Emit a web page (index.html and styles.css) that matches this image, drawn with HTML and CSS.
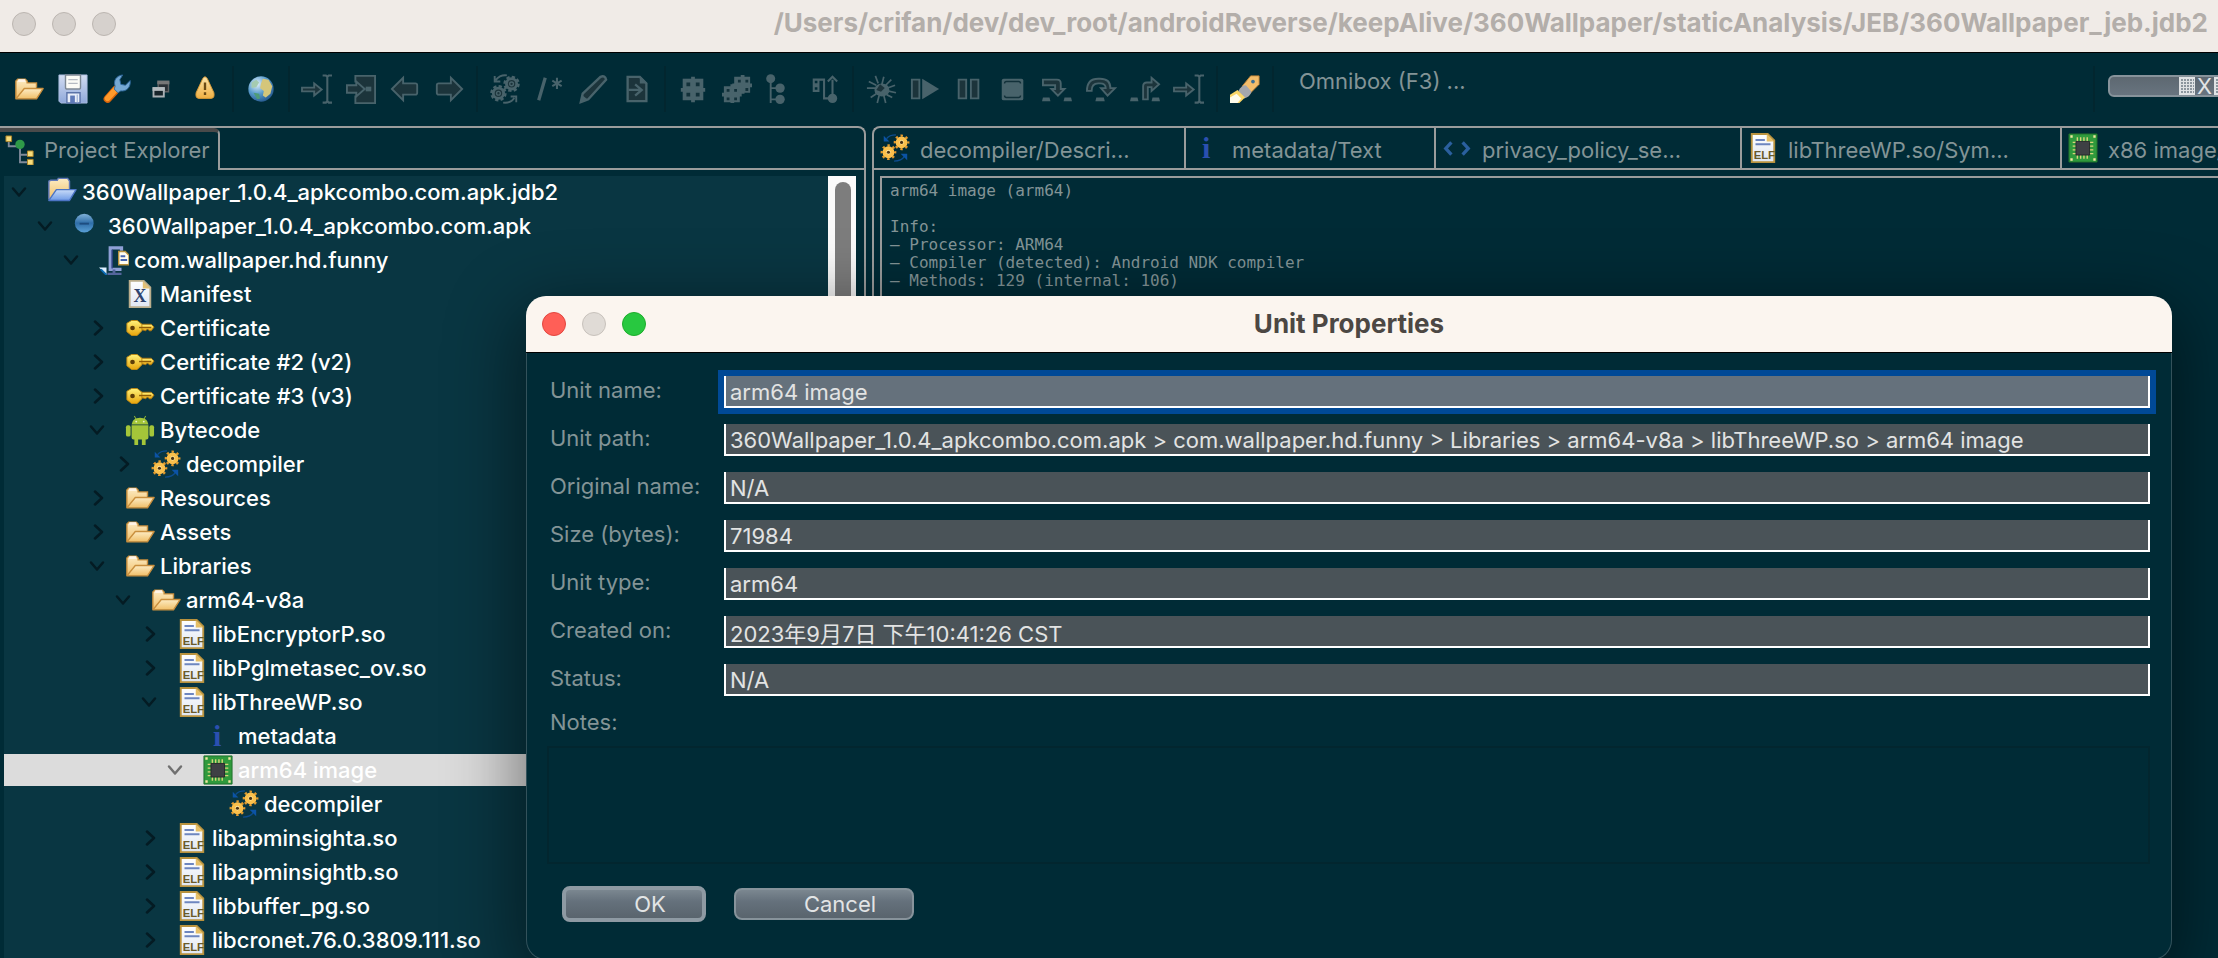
FILE: index.html
```html
<!DOCTYPE html>
<html lang="en">
<head>
<meta charset="utf-8">
<title>360Wallpaper_jeb.jdb2</title>
<link rel="stylesheet" href="styles.css">
</head>
<body>
<svg class="sprite" aria-hidden="true">
  <defs>
    <linearGradient id="gFolder" x1="0" y1="0" x2="0" y2="1"><stop offset="0" stop-color="#fdecc4"/><stop offset="1" stop-color="#f0bf68"/></linearGradient>
    <linearGradient id="gBlue" x1="0" y1="0" x2="0" y2="1"><stop offset="0" stop-color="#c9dcf8"/><stop offset="1" stop-color="#6f9be6"/></linearGradient>
    <linearGradient id="gSave" x1="0" y1="0" x2="0" y2="1"><stop offset="0" stop-color="#d3ddf1"/><stop offset="1" stop-color="#8fa8da"/></linearGradient>
    <linearGradient id="gWarn" x1="0" y1="0" x2="0" y2="1"><stop offset="0" stop-color="#fbe3a8"/><stop offset="1" stop-color="#efb043"/></linearGradient>
    <linearGradient id="gKey" x1="0" y1="0" x2="0" y2="1"><stop offset="0" stop-color="#fff27a"/><stop offset="1" stop-color="#e8a50c"/></linearGradient>
    <linearGradient id="gPage" x1="0" y1="0" x2="0" y2="1"><stop offset="0" stop-color="#ffffff"/><stop offset="1" stop-color="#dfe6f2"/></linearGradient>
    <radialGradient id="gGlobe" cx=".35" cy=".3" r=".8"><stop offset="0" stop-color="#e4f2fb"/><stop offset=".5" stop-color="#5a9ccc"/><stop offset="1" stop-color="#1d4f86"/></radialGradient>
    <linearGradient id="gBall" x1="0" y1="0" x2="0" y2="1"><stop offset="0" stop-color="#7fb0d8"/><stop offset=".5" stop-color="#2f6ea8"/><stop offset="1" stop-color="#5aa0d6"/></linearGradient>
  </defs>
</svg>
<svg class="symbols" aria-hidden="true">
  <symbol id="folder" viewBox="0 0 32 32">
    <path d="M2 26V7.500l2-2h8l2 2v2h10v5" fill="url(#gFolder)" stroke="#c98f3e" stroke-width="1.500"/>
    <path d="M4.500 5.500h7.500v3h-7.500z" fill="#fff4e6"/>
    <path d="M2 26.500L11 15.500H31L24 26.500Z" fill="url(#gFolder)" stroke="#c98f3e" stroke-width="1.500" stroke-linejoin="round"/>
  </symbol>
  <symbol id="folderblue" viewBox="0 0 32 32">
    <path d="M2 24V4.500l2-1h7l1-2h10l2 3v8" fill="url(#gFolder)" stroke="#6279b8" stroke-width="1.500"/>
    <path d="M2 25L10 13.500H31L24 25Z" fill="url(#gBlue)" stroke="#4c74c4" stroke-width="1.500" stroke-linejoin="round"/>
  </symbol>
  <symbol id="save" viewBox="0 0 32 32">
    <path d="M1 1h30v30H3l-2-2z" fill="url(#gSave)" stroke="#a9bbdf"/>
    <path d="M8 1h16v13q0 2-2 2H10q-2 0-2-2z" fill="#fbfbf6" stroke="#7d8894" stroke-width="1.500"/>
    <path d="M11 6h10M11 10h10" stroke="#b5bac2" stroke-width="1.500"/>
    <path d="M9.500 20h14v11h-14z" fill="#e9eef8" stroke="#5b73a8" stroke-width="1.500"/><path d="M13 23h5v8h-5z" fill="#5f7ab8"/><path d="M20.500 22v9" stroke="#8ea4d0"/>
  </symbol>
  <symbol id="wrench" viewBox="0 0 32 32">
    <path d="M6 26.500L15 16.500" stroke="#d9650a" stroke-width="8.500" stroke-linecap="round"/>
    <path d="M6 26L15 16" stroke="#ff9a2b" stroke-width="6" stroke-linecap="round"/>
    <path d="M14 13c-2-6 1-11 8-12l-3 5 1 5 5 1 5-5c1 7-4 12-10 11l-3 2-4-4z" fill="#76a9d4" stroke="#2d679c"/>
  </symbol>
  <symbol id="restore" viewBox="0 0 32 32">
    <path d="M13 9h11v10H13z" fill="#2a3035" stroke="#606264" stroke-width="1.500"/><path d="M12 7h13v4H12z" fill="#777"/>
    <path d="M8 15h11v9H8z" fill="#17242a" stroke="#a9b0b4" stroke-width="2"/><path d="M7 14h13v4H7z" fill="#b3babd"/>
  </symbol>
  <symbol id="warn" viewBox="0 0 32 32">
    <path d="M13.500 5q2.500-4 5 0l7 15q1 6-3 6h-13q-4 0-3-6z" fill="url(#gWarn)" stroke="#d79a35"/>
    <path d="M16 9v8M16 19.500v3" stroke="#6b4a14" stroke-width="2.500"/>
  </symbol>
  <symbol id="globe" viewBox="0 0 32 32">
    <circle cx="16" cy="16" r="13.500" fill="url(#gGlobe)"/>
    <path d="M18 5l6 1 4 7-2 8-5 4-3-2 1-5-4-3 1-5z" fill="#d5c67a"/><path d="M6 9l5-3 3 3-3 5-5 1z" fill="#a5cbb0"/><path d="M8 20l6 1 1 5-3 1z" fill="#4f9c78"/>
  </symbol>
  <symbol id="toCaret" viewBox="0 0 32 32">
    <path d="M0 14.500h13V10l8 6.500-8 6.500v-4.500H0z" fill="#1c343b" stroke="#48636b" stroke-width="2"/>
    <path d="M22 1.500h3.500l1.500 1.500 1.500-1.500H32M22 30.500h3.500l1.500-1.500 1.500 1.500H32M27 3v26" fill="none" stroke="#48636b" stroke-width="2.200"/>
  </symbol>
  <symbol id="enter" viewBox="0 0 32 32">
    <path d="M10 9V2h21v29H10v-8" fill="#1c343b" stroke="#48636b" stroke-width="2"/>
    <path d="M1 12h10V8l9 8-9 8v-4H1z" fill="#1c343b" stroke="#48636b" stroke-width="2"/><path d="M21 13.500h6v5h-6z" fill="#48636b"/>
  </symbol>
  <symbol id="left" viewBox="0 0 32 32"><path d="M2 16L14 4v6h13q2 0 2 2v8q0 2-2 2H14v6z" fill="#1c343b" stroke="#48636b" stroke-width="2"/></symbol>
  <symbol id="right" viewBox="0 0 32 32"><path d="M30 16L18 4v6H5q-2 0-2 2v8q0 2 2 2h13v6z" fill="#1c343b" stroke="#48636b" stroke-width="2"/></symbol>
  <symbol id="gearsOff" viewBox="0 0 32 32">
    <circle cx="9" cy="20.500" r="5.500" fill="#1c343b" stroke="#48636b" stroke-width="3"/><circle cx="9" cy="20.500" r="7.500" fill="none" stroke="#48636b" stroke-width="2.500" stroke-dasharray="3.500 2.390"/><circle cx="9" cy="20.500" r="2" fill="none" stroke="#48636b" stroke-width="1.500"/>
    <circle cx="23" cy="10.500" r="5.500" fill="#1c343b" stroke="#48636b" stroke-width="3"/><circle cx="23" cy="10.500" r="7.500" fill="none" stroke="#48636b" stroke-width="2.500" stroke-dasharray="3.500 2.390"/><circle cx="23" cy="10.500" r="2" fill="none" stroke="#48636b" stroke-width="1.500"/>
    <path d="M18 1.500q-7-1-12 5M5 2v6h6M14 30.500q8 1 12-5M28 30v-6h-6" fill="none" stroke="#48636b" stroke-width="2"/>
  </symbol>
  <symbol id="comment" viewBox="0 0 32 32"><path d="M5 28L12 4" stroke="#48636b" stroke-width="3.500"/><path d="M24.500 4v12M19.500 7l10 6M29.500 7l-10 6" stroke="#48636b" stroke-width="2.200"/></symbol>
  <symbol id="pencil" viewBox="0 0 32 32"><path d="M3 30l2-9L24 3q5-2 6 3L11 27z" fill="#1c343b" stroke="#48636b" stroke-width="2.500"/><path d="M2 31l2-9 6 5z" fill="#48636b"/></symbol>
  <symbol id="docArrow" viewBox="0 0 32 32"><path d="M6 3h13l7 7v19H6z" fill="#1c343b" stroke="#48636b" stroke-width="2.500"/><path d="M19 2v8h8z" fill="#48636b"/><path d="M7 17h12M14 11l7 6-7 6" fill="none" stroke="#48636b" stroke-width="2.500"/></symbol>
  <symbol id="chipOff" viewBox="0 0 32 32"><path d="M5 5h22v23H5z" fill="#48636b"/><path d="M14 3h4v27h-4zM3 15h26v4H3z" fill="#48636b"/><path d="M9 9h4v4H9zM19 9h4v4h-4zM9 20h4v4H9zM19 20h4v4h-4z" fill="#12313a"/></symbol>
  <symbol id="chipsOff" viewBox="0 0 32 32"><path d="M13 3h17v17H13zM2 13h17v17H2zM20 1h4v20h-4zM9 11h4v20H9zM11 10h21v4H11zM0 20h21v4H0z" fill="#48636b"/><path d="M17 6h3v3h-3zM25 6h3v3h-3zM25 15h3v3h-3zM5 16h3v3H5zM13 16h3v3h-3zM5 25h3v3H5zM13 25h3v3h-3z" fill="#12313a"/></symbol>
  <symbol id="treeOff" viewBox="0 0 32 32"><path d="M5 5v26M5 15h10M5 27h10" fill="none" stroke="#48636b" stroke-width="2"/><circle cx="5" cy="5" r="4.800" fill="#48636b"/><circle cx="15" cy="15" r="5" fill="#48636b"/><circle cx="15" cy="27" r="5" fill="#48636b"/></symbol>
  <symbol id="flowOff" viewBox="0 0 32 32"><path d="M4 6h5v5H4zM4 13h5v5H4zM9 6h6v20h9M24 26V6M19 8l5-5 5 5" fill="none" stroke="#48636b" stroke-width="2.200"/><circle cx="24" cy="26" r="5" fill="#48636b"/></symbol>
  <symbol id="bug" viewBox="0 0 32 32"><path d="M3 8l8 4M10 2l3 8M19 3l-2 8M27 6l-6 6M31 12l-8 3M32 20l-9-2M28 25l-6-3M21 31l-2-8M12 31l2-8M5 25l6-4M1 15h9" stroke="#48636b" stroke-width="1.800"/><ellipse cx="17" cy="17" rx="8" ry="7" fill="#48636b"/><path d="M15 11l5 4-4 4-5-2z" fill="#1c343b"/></symbol>
  <symbol id="resume" viewBox="0 0 32 32"><path d="M2 6h8v20H2z" fill="#1c343b" stroke="#48636b" stroke-width="2"/><path d="M13 5l18 11-18 11z" fill="#48636b"/></symbol>
  <symbol id="pause" viewBox="0 0 32 32"><path d="M5 6h8v20H5zM18 6h8v20h-8z" fill="#1c343b" stroke="#48636b" stroke-width="2"/></symbol>
  <symbol id="stop" viewBox="0 0 32 32"><rect x="4" y="5" width="23" height="23" rx="2" fill="#48636b"/><path d="M7 10q0-2 2-2h13q2 0 2 2M7 23q0 2 2 2h13q2 0 2-2" fill="none" stroke="#12313a" stroke-width="1.500"/></symbol>
  <symbol id="stepInto" viewBox="0 0 32 32"><path d="M1 6h15q4 0 4 4v6h4l-7 7-7-7h4v-4H1z" fill="#1c343b" stroke="#48636b" stroke-width="2"/><path d="M1 25h7l1 4H0zM24 25h7l1 4h-9z" fill="#48636b"/></symbol>
  <symbol id="stepOver" viewBox="0 0 32 32"><path d="M1 18Q1 5 13 5h2q11 0 11 10h5l-8 8-7-8h5q0-5-6-5h-2q-7 0-7 8z" fill="#1c343b" stroke="#48636b" stroke-width="2"/><path d="M11 25h8l1 4H10z" fill="#48636b"/></symbol>
  <symbol id="stepOut" viewBox="0 0 32 32"><path d="M14 27V13q0-4 4-4h5V4l8 7-8 7v-4h-4v13z" fill="#1c343b" stroke="#48636b" stroke-width="2"/><path d="M1 25h7l1 4H0zM24 25h7l1 4h-9z" fill="#48636b"/></symbol>
  <symbol id="rocket" viewBox="0 0 32 32"><path d="M13 13L22 2h9v9L20 22z" fill="#f3bd6b" stroke="#c4873a"/><circle cx="24.500" cy="8" r="2" fill="#3c6f94"/><path d="M9 18q3-6 8-6l6 7q-2 6-8 7z" fill="#a5a7ad"/><path d="M0 31v-9l8-5 8 8-6 6z" fill="#fbd768"/><path d="M0 31v-6l7-4 5 5-4 5z" fill="#fffceb"/></symbol>
  <symbol id="explorer" viewBox="0 0 32 32"><path d="M4 5v7h12v17h10M16 21h10" fill="none" stroke="#7f8a99" stroke-width="2"/><path d="M1 1h6v6H1zM24 17h6v6h-6zM24 26h6v6h-6z" fill="#f7dd7c" stroke="#ad8427"/><circle cx="16" cy="10" r="5" fill="#2e9a48"/></symbol>
  <symbol id="gears" viewBox="0 0 32 32">
    <path d="M17 2q-7 0-10 4M15 30q8 0 11-5" fill="none" stroke="#0c4c8f" stroke-width="1.500"/><path d="M4 3v6h6zM29 29v-7h-7z" fill="#0b53a5"/>
    <circle cx="9" cy="20.500" r="7.200" fill="none" stroke="#e39a2c" stroke-width="2.400" stroke-dasharray="2.600 3.050" stroke-dashoffset="1.300"/><circle cx="9" cy="20.500" r="4.300" fill="#fff3b8" stroke="#fbc04c" stroke-width="4"/><circle cx="9" cy="20.500" r="1.700" fill="#4c3210"/>
    <circle cx="23" cy="10" r="7.200" fill="none" stroke="#e39a2c" stroke-width="2.400" stroke-dasharray="2.600 3.050" stroke-dashoffset="1.300"/><circle cx="23" cy="10" r="4.300" fill="#fff3b8" stroke="#fbc04c" stroke-width="4"/><circle cx="23" cy="10" r="1.700" fill="#4c3210"/>
  </symbol>
  <symbol id="info" viewBox="0 0 32 32"><text x="15" y="27" text-anchor="middle" class="t-info">i</text></symbol>
  <symbol id="code" viewBox="0 0 32 32"><path d="M10 10l-6 6.500 6 6.500M22 10l6 6.500-6 6.500" fill="none" stroke="#2a5f9e" stroke-width="3.500"/></symbol>
  <symbol id="elf" viewBox="0 0 32 32"><path d="M4 1h17l7 7v23H4z" fill="url(#gPage)" stroke="#b8923e" stroke-width="2"/><path d="M20 1v8h8z" fill="#e6bf66"/><path d="M8 7.500h10M8 12h16" stroke="#6d86c0" stroke-width="2"/><text x="6" y="28" class="t-elf">ELF</text></symbol>
  <symbol id="chip" viewBox="0 0 32 32"><path d="M1 1h30v30H1z" fill="#2f9a3c" stroke="#1f6f2c"/><path d="M10 4.500v23M13.500 4.500v23M17 4.500v23M20.500 4.500v23M5 10h22M5 14h22M5 18h22M5 22h22" stroke="#d8d47a" stroke-width="1.500"/><path d="M8.500 9h14.500v14.500H8.500z" fill="#3e4044" stroke="#25272a"/><path d="M2.500 2.500h2.500v2.500h-2.500zM27 2.500h2.500v2.500H27zM2.500 27h2.500v2.500h-2.500zM27 27h2.500v2.500H27z" fill="#f2e6a0"/></symbol>
  <symbol id="ball" viewBox="0 0 32 32"><circle cx="12" cy="13" r="10" fill="url(#gBall)"/><path d="M7 13.500h10" stroke="#1d4d80" stroke-width="2"/></symbol>
  <symbol id="archive" viewBox="0 0 32 32"><path d="M24 6V3H12v23h12" fill="none" stroke="#8fa0d6" stroke-width="3.500"/><path d="M14 5v20" stroke="#33458a" stroke-width="1.500"/><path d="M16 26v4M9 31h15" stroke="#54659c" stroke-width="3"/><path d="M21 7h7l4 4v10H21z" fill="#fffdf0" stroke="#b8923e" stroke-width="1.500"/><path d="M23 12h5M23 16h7" stroke="#4565b0" stroke-width="2"/><path d="M0 24h8v8z" fill="#dff0ff"/><path d="M2 26l6 6" stroke="#0b6cb5" stroke-width="2"/></symbol>
  <symbol id="manifest" viewBox="0 0 32 32"><path d="M5 2h15l7 7v21H5z" fill="url(#gPage)" stroke="#b9ad8c" stroke-width="2"/><path d="M19 2v8h8z" fill="#e2c175"/><text x="16" y="25" text-anchor="middle" class="t-x">X</text></symbol>
  <symbol id="key" viewBox="0 0 32 32"><path d="M15 12h13l3 3-3 4h-2l-2-2-2 2-3-1h-4z" fill="url(#gKey)" stroke="#a87412"/><path d="M2 11l5-3h6l5 4v7l-5 5H7l-5-4z" fill="url(#gKey)" stroke="#c08a12" stroke-linejoin="round"/><path d="M15 15.500h13" stroke="#8d5c08" stroke-width="1.500"/><circle cx="8" cy="16" r="2.500" fill="#5e3d08"/></symbol>
  <symbol id="android" viewBox="0 0 32 32"><path d="M7 10q1-7 9-7t9 7zM7 11h18v13q0 2-2 2H9q-2 0-2-2zM10 25h4v7h-4zM18 25h4v7h-4z" fill="#a4c639"/><rect x="1" y="11" width="5" height="12" rx="2" fill="#a4c639"/><rect x="26" y="11" width="5" height="12" rx="2" fill="#a4c639"/><path d="M10 1l2 4M22 1l-2 4" stroke="#a4c639"/><circle cx="12" cy="7" r="1" fill="#e9f2cf"/><circle cx="20" cy="7" r="1" fill="#e9f2cf"/></symbol>
  <symbol id="down" viewBox="0 0 16 16"><path d="M2 4.500l6 7 6-7" fill="none" stroke="currentColor" stroke-width="2.500" stroke-linecap="round" stroke-linejoin="round"/></symbol>
  <symbol id="next" viewBox="0 0 16 16"><path d="M6 1.500l7 6.500-7 6.500" fill="none" stroke="currentColor" stroke-width="2.500" stroke-linecap="round" stroke-linejoin="round"/></symbol>
</svg>

<div class="app">
  <header class="titlebar">
    <div class="lights"><span class="light"></span><span class="light"></span><span class="light"></span></div>
    <h1 class="title">/Users/crifan/dev/dev_root/androidReverse/keepAlive/360Wallpaper/staticAnalysis/JEB/360Wallpaper_jeb.jdb2</h1>
  </header>

  <div class="toolbar">
    <button class="tool" aria-label="Open"><svg><use href="#folder"/></svg></button>
    <button class="tool" aria-label="Save"><svg><use href="#save"/></svg></button>
    <button class="tool" aria-label="Options"><svg><use href="#wrench"/></svg></button>
    <button class="tool" aria-label="Restore"><svg><use href="#restore"/></svg></button>
    <button class="tool" aria-label="Notifications"><svg><use href="#warn"/></svg></button>
    <span class="sep"></span>
    <button class="tool" aria-label="Web"><svg><use href="#globe"/></svg></button>
    <span class="sep"></span>
    <button class="tool" aria-label="Jump to"><svg><use href="#toCaret"/></svg></button>
    <button class="tool" aria-label="Follow"><svg><use href="#enter"/></svg></button>
    <button class="tool" aria-label="Back"><svg><use href="#left"/></svg></button>
    <button class="tool" aria-label="Forward"><svg><use href="#right"/></svg></button>
    <span class="sep"></span>
    <button class="tool" aria-label="Decompile"><svg><use href="#gearsOff"/></svg></button>
    <button class="tool" aria-label="Comment"><svg><use href="#comment"/></svg></button>
    <button class="tool" aria-label="Rename"><svg><use href="#pencil"/></svg></button>
    <button class="tool" aria-label="Cross-references"><svg><use href="#docArrow"/></svg></button>
    <span class="sep"></span>
    <button class="tool" aria-label="Create package"><svg><use href="#chipOff"/></svg></button>
    <button class="tool" aria-label="Move to package"><svg><use href="#chipsOff"/></svg></button>
    <button class="tool" aria-label="Type hierarchy"><svg><use href="#treeOff"/></svg></button>
    <button class="tool" aria-label="Call graph"><svg><use href="#flowOff"/></svg></button>
    <span class="sep"></span>
    <button class="tool" aria-label="Debug"><svg><use href="#bug"/></svg></button>
    <button class="tool" aria-label="Resume"><svg><use href="#resume"/></svg></button>
    <button class="tool" aria-label="Pause"><svg><use href="#pause"/></svg></button>
    <button class="tool" aria-label="Stop"><svg><use href="#stop"/></svg></button>
    <button class="tool" aria-label="Step into"><svg><use href="#stepInto"/></svg></button>
    <button class="tool" aria-label="Step over"><svg><use href="#stepOver"/></svg></button>
    <button class="tool" aria-label="Step out"><svg><use href="#stepOut"/></svg></button>
    <button class="tool" aria-label="Run to line"><svg><use href="#toCaret"/></svg></button>
    <span class="sep"></span>
    <button class="tool" aria-label="Quick start"><svg><use href="#rocket"/></svg></button>
    <span class="sep"></span>
    <span class="omnibox">Omnibox (F3) ...</span>
    <span class="sep"></span>
    <button class="xbtn"><i class="hatch"></i>X<i class="hatch"></i></button>
  </div>

  <main class="panels">
    <section class="panel explorer">
      <div class="tabs">
        <button class="tab-active"><svg class="ico"><use href="#explorer"/></svg>Project Explorer</button>
        <span class="tabs-rest"></span>
      </div>
      <div class="tree-wrap">
        <ul class="tree">
          <li class="row l0"><svg class="chev"><use href="#down"/></svg><svg class="ico"><use href="#folderblue"/></svg><span>360Wallpaper_1.0.4_apkcombo.com.apk.jdb2</span></li>
          <li class="row l1"><svg class="chev"><use href="#down"/></svg><svg class="ico"><use href="#ball"/></svg><span>360Wallpaper_1.0.4_apkcombo.com.apk</span></li>
          <li class="row l2"><svg class="chev"><use href="#down"/></svg><svg class="ico"><use href="#archive"/></svg><span>com.wallpaper.hd.funny</span></li>
          <li class="row l3"><svg class="chev"></svg><svg class="ico"><use href="#manifest"/></svg><span>Manifest</span></li>
          <li class="row l3"><svg class="chev"><use href="#next"/></svg><svg class="ico"><use href="#key"/></svg><span>Certificate</span></li>
          <li class="row l3"><svg class="chev"><use href="#next"/></svg><svg class="ico"><use href="#key"/></svg><span>Certificate #2 (v2)</span></li>
          <li class="row l3"><svg class="chev"><use href="#next"/></svg><svg class="ico"><use href="#key"/></svg><span>Certificate #3 (v3)</span></li>
          <li class="row l3"><svg class="chev"><use href="#down"/></svg><svg class="ico"><use href="#android"/></svg><span>Bytecode</span></li>
          <li class="row l4"><svg class="chev"><use href="#next"/></svg><svg class="ico"><use href="#gears"/></svg><span>decompiler</span></li>
          <li class="row l3"><svg class="chev"><use href="#next"/></svg><svg class="ico"><use href="#folder"/></svg><span>Resources</span></li>
          <li class="row l3"><svg class="chev"><use href="#next"/></svg><svg class="ico"><use href="#folder"/></svg><span>Assets</span></li>
          <li class="row l3"><svg class="chev"><use href="#down"/></svg><svg class="ico"><use href="#folder"/></svg><span>Libraries</span></li>
          <li class="row l4"><svg class="chev"><use href="#down"/></svg><svg class="ico"><use href="#folder"/></svg><span>arm64-v8a</span></li>
          <li class="row l5"><svg class="chev"><use href="#next"/></svg><svg class="ico"><use href="#elf"/></svg><span>libEncryptorP.so</span></li>
          <li class="row l5"><svg class="chev"><use href="#next"/></svg><svg class="ico"><use href="#elf"/></svg><span>libPglmetasec_ov.so</span></li>
          <li class="row l5"><svg class="chev"><use href="#down"/></svg><svg class="ico"><use href="#elf"/></svg><span>libThreeWP.so</span></li>
          <li class="row l6"><svg class="chev"></svg><svg class="ico"><use href="#info"/></svg><span>metadata</span></li>
          <li class="row l6 selected"><svg class="chev"><use href="#down"/></svg><svg class="ico"><use href="#chip"/></svg><span>arm64 image</span></li>
          <li class="row l7"><svg class="chev"></svg><svg class="ico"><use href="#gears"/></svg><span>decompiler</span></li>
          <li class="row l5"><svg class="chev"><use href="#next"/></svg><svg class="ico"><use href="#elf"/></svg><span>libapminsighta.so</span></li>
          <li class="row l5"><svg class="chev"><use href="#next"/></svg><svg class="ico"><use href="#elf"/></svg><span>libapminsightb.so</span></li>
          <li class="row l5"><svg class="chev"><use href="#next"/></svg><svg class="ico"><use href="#elf"/></svg><span>libbuffer_pg.so</span></li>
          <li class="row l5"><svg class="chev"><use href="#next"/></svg><svg class="ico"><use href="#elf"/></svg><span>libcronet.76.0.3809.111.so</span></li>
        </ul>
        <div class="scroll"><div class="thumb"></div></div>
      </div>
    </section>

    <section class="panel editor">
      <div class="tabs">
        <button class="tab t1"><svg class="ico"><use href="#gears"/></svg><span>decompiler/Descri...</span></button>
        <button class="tab t2"><svg class="ico"><use href="#info"/></svg><span>metadata/Text</span></button>
        <button class="tab t3"><svg class="ico"><use href="#code"/></svg><span>privacy_policy_se...</span></button>
        <button class="tab t4"><svg class="ico"><use href="#elf"/></svg><span>libThreeWP.so/Sym...</span></button>
        <button class="tab t5"><svg class="ico"><use href="#chip"/></svg><span>x86 image/Disassembly</span></button>
      </div>
      <pre class="text">arm64 image (arm64)

Info:
– Processor: ARM64
– Compiler (detected): Android NDK compiler
– Methods: 129 (internal: 106)</pre>
    </section>
  </main>
</div>

<form class="dialog" role="dialog" aria-labelledby="dlg-title">
  <header class="dlg-bar">
    <div class="lights"><span class="light close"></span><span class="light"></span><span class="light zoom"></span></div>
    <h2 class="dlg-title" id="dlg-title">Unit Properties</h2>
  </header>
  <div class="fields">
    <label for="f1">Unit name:</label><input id="f1" class="focused" value="arm64 image">
    <label for="f2">Unit path:</label><input id="f2" value="360Wallpaper_1.0.4_apkcombo.com.apk &gt; com.wallpaper.hd.funny &gt; Libraries &gt; arm64-v8a &gt; libThreeWP.so &gt; arm64 image">
    <label for="f3">Original name:</label><input id="f3" value="N/A">
    <label for="f4">Size (bytes):</label><input id="f4" value="71984">
    <label for="f5">Unit type:</label><input id="f5" value="arm64">
    <label for="f6">Created on:</label><input id="f6" value="2023年9月7日 下午10:41:26 CST">
    <label for="f7">Status:</label><input id="f7" value="N/A">
  </div>
  <div class="notes">
    <label for="f8">Notes:</label>
    <textarea id="f8"></textarea>
  </div>
  <div class="actions">
    <button type="button" class="btn ok">OK</button>
    <button type="button" class="btn cancel">Cancel</button>
  </div>
</form>
</body>
</html>
```

FILE: styles.css
```css
* { box-sizing: border-box; }
html, body { height: 100%; }
body {
  margin: 0;
  overflow: hidden;
  background: #002b36;
  color: #839496;
  font-family: Inter, "Noto Sans CJK SC", sans-serif;
  font-size: 22px;
}
button, input, textarea { font: inherit; }
button { margin: 0; padding: 0; border: 0; background: none; color: inherit; }
.sprite { position: absolute; width: 0; height: 0; }
.symbols { display: none; }
.t-info { font: bold 32px "Liberation Serif", serif; fill: #2b50b0; }
.t-elf { font: bold 12px "Liberation Sans", sans-serif; fill: #6b5a28; }
.t-x { font: bold 19px "Liberation Serif", serif; fill: #2f4470; }

.app { display: flex; flex-direction: column; height: 100%; }

.titlebar {
  display: flex;
  align-items: center;
  justify-content: space-between;
  height: 53px;
  flex: none;
  padding: 0 10px 4px 12px;
  background: #f0ebe7;
  border-bottom: 1px solid #000;
}
.lights { display: flex; gap: 16px; }
.light { width: 24px; height: 24px; border-radius: 50%; background: #d6d1cd; border: 1px solid #bcb6b1; }
.title { margin: 0; padding-bottom: 2px; font-size: 26px; font-weight: 700; line-height: 30px; color: #b3aeaa; white-space: nowrap; }

.toolbar { display: flex; align-items: center; flex: none; height: 73px; padding: 0 0 2px 7px; overflow: hidden; }
.tool { display: flex; justify-content: center; flex: none; width: 44px; }
.tool svg { width: 32px; height: 30px; }
.sep { flex: none; width: 12px; height: 46px; background: linear-gradient(#02262f, #02262f) center / 2px 100% no-repeat; }
.omnibox { flex: 1; padding: 0 0 16px 20px; }
.xbtn {
  display: flex;
  align-items: center;
  gap: 2px;
  flex: none;
  width: 160px;
  height: 22px;
  margin: 0 -50px 6px 8px;
  padding-left: 69px;
  border: 2px solid #87939b;
  border-radius: 6px;
  background: linear-gradient(#5d6871, #68747f);
  color: #e2e4e5;
}
.hatch { flex: none; width: 16px; height: 18px; border: 1px solid #dfe2e4; background: repeating-linear-gradient(90deg, #dfe2e4 0 1px, transparent 1px 3px), repeating-linear-gradient(#dfe2e4 0 1px, #8c969e 1px 3px); }

.panels { display: flex; flex: 1; gap: 6px; min-height: 0; }
.panel { display: flex; flex-direction: column; min-width: 0; border: 2px solid #9a9c9c; border-bottom: 0; }
.explorer { flex: 0 0 866px; border-left: 0; border-top-right-radius: 8px; }
.editor { flex: 1; border-right: 0; border-top-left-radius: 8px; overflow: hidden; }
.tabs { display: flex; flex: none; height: 42px; }
.ico { flex: none; width: 30px; height: 30px; }
.tab-active {
  display: flex;
  align-items: center;
  gap: 9px;
  width: 220px;
  padding: 0 0 2px 5px;
  border-top: 4px solid #4a4a4a;
  border-right: 2px solid #9a9c9c;
  border-top-right-radius: 6px;
  white-space: nowrap;
}
.tabs-rest { flex: 1; border-bottom: 2px solid #9a9c9c; }
.tree-wrap { display: flex; flex: 1; min-height: 0; padding: 6px 8px 0 4px; }
.tree { flex: 1; margin: 0; padding: 0; list-style: none; background: #093642; color: #fff; font-weight: 500; overflow: hidden; }
.row { display: flex; align-items: center; height: 32px; margin-bottom: 2px; white-space: nowrap; }
.row .ico { margin: 0 5px 0 20px; }
.chev { flex: none; width: 16px; height: 16px; margin-left: 7px; color: #041b23; }
.l1 { padding-left: 26px; }
.l2 { padding-left: 52px; }
.l3 { padding-left: 78px; }
.l4 { padding-left: 104px; }
.l5 { padding-left: 130px; }
.l6 { padding-left: 156px; }
.l7 { padding-left: 182px; }
.selected { background: #dcdcdc; }
.selected .chev { color: #707070; }
.scroll { width: 28px; padding: 6px 5px 0 7px; background: #fafafa; }
.thumb { height: 480px; border-radius: 8px; background: #7d7d7d; }

.editor .tabs { border-bottom: 2px solid #9a9c9c; }
.tab { display: flex; align-items: center; gap: 10px; flex: none; padding-left: 6px; border-right: 2px solid #9a9c9c; white-space: nowrap; }
.tab span { padding-top: 3px; }
.t1 { width: 312px; }
.t2 { width: 250px; }
.t3 { width: 306px; }
.t4 { width: 320px; }
.t5 { border-right: 0; }
.text {
  flex: 1;
  margin: 6px 0 0 6px;
  padding: 4px 8px;
  border: 2px solid #9a9c9c;
  border-right: 0;
  border-bottom: 0;
  font: 16px/18px "DejaVu Sans Mono", monospace;
}

.dialog {
  position: absolute;
  top: 296px;
  left: 526px;
  right: 46px;
  height: 664px;
  border-radius: 20px;
  background: #002b36;
  box-shadow: 0 20px 70px 10px rgba(0, 0, 0, .45), inset 0 0 0 1px #33525b;
}
.dlg-bar {
  display: grid;
  grid-template-columns: 1fr auto 1fr;
  align-items: center;
  height: 57px;
  padding: 0 16px;
  border-bottom: 1px solid #000;
  border-radius: 20px 20px 0 0;
  background: #fbf5ef;
}
.dlg-bar .light { background: #e0dbd6; border-color: #c8c2bc; }
.dlg-bar .close { background: #ff5f57; border-color: #e2463f; }
.dlg-bar .zoom { background: #28c840; border-color: #1dad2b; }
.dlg-title { margin: 0; padding-bottom: 2px; font-size: 26px; font-weight: 700; color: #4c4743; }
.fields {
  display: grid;
  grid-template-columns: 158px 1fr;
  column-gap: 16px;
  row-gap: 16px;
  padding: 23px 22px 0 24px;
}
.fields label { line-height: 28px; white-space: nowrap; }
.fields input {
  width: 100%;
  height: 32px;
  padding: 2px 4px 0;
  border: 2px solid #fff;
  border-top: 0;
  border-radius: 0;
  outline: 0;
  background: #4a5358;
  color: #e2e3e3;
}
.fields .focused { background: #65717c; box-shadow: 0 0 0 6px #004996; }
.notes { display: flex; flex-direction: column; gap: 10px; padding: 12px 22px 0 21px; }
.notes label { padding-left: 3px; line-height: 28px; }
.notes textarea { height: 118px; border: 2px solid #02262f; background: #002b36; color: #839496; resize: none; outline: 0; }
.actions { display: flex; align-items: center; gap: 28px; padding: 22px 36px; }
.btn { height: 32px; padding-left: 32px; border: 2px solid #87939b; border-radius: 8px; background: linear-gradient(#7b8790, #65717c 40%, #59646d); color: #e2e4e5; line-height: 28px; }
.ok { width: 144px; height: 36px; border: 4px solid #8e9aa3; }
.cancel { width: 180px; }
```
